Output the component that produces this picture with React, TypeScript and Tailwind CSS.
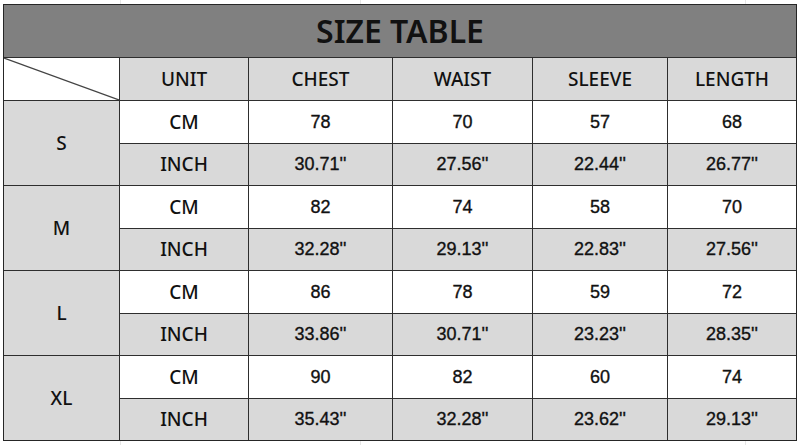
import React from "react";

const rows = [
  { size: "S", cm: ["78", "70", "57", "68"], inch: ["30.71''", "27.56''", "22.44''", "26.77''"] },
  { size: "M", cm: ["82", "74", "58", "70"], inch: ["32.28''", "29.13''", "22.83''", "27.56''"] },
  { size: "L", cm: ["86", "78", "59", "72"], inch: ["33.86''", "30.71''", "23.23''", "28.35''"] },
  { size: "XL", cm: ["90", "82", "60", "74"], inch: ["35.43''", "32.28''", "23.62''", "29.13''"] },
];

const heads = ["CHEST", "WAIST", "SLEEVE", "LENGTH"];

const label = "font-['Noto_Sans',sans-serif] font-medium text-[19px] text-[#111]";
const num = "font-['Liberation_Sans',Arial,sans-serif] text-[18px] text-[#111] [-webkit-text-stroke:0.35px_#111]";

export default function App() {
  return (
    <div className="w-[800px] h-[445px] bg-white relative overflow-hidden">
      {/* faint sheet gridlines behind the table */}
      <div className="absolute left-[120px] top-0 w-px h-full bg-[#e6e6e6]" />
      <div className="absolute left-[360px] top-0 w-px h-full bg-[#e6e6e6]" />
      <div className="absolute left-[745px] top-0 w-px h-full bg-[#e6e6e6]" />

      <div className="absolute left-[3px] top-[4px] w-[794px] h-[437px] border border-[#262626] bg-[#2e2e2e] grid grid-cols-[115px_128px_143px_139px_134px_128px] grid-rows-[52px_42px_42px_41px_42px_41px_42px_41px_42px_41px] gap-px">
        <div className="col-span-6 bg-[#808080] flex items-center justify-center">
          <span className="font-['Noto_Sans',sans-serif] font-semibold text-[32px] text-[#111]">SIZE TABLE</span>
        </div>

        <div className="bg-white relative">
          <svg className="absolute inset-0" width="115" height="42" viewBox="0 0 115 42">
            <line x1="0" y1="0" x2="115" y2="42" stroke="#444" strokeWidth="1.2" />
          </svg>
        </div>
        <div className={`bg-[#d9d9d9] flex items-center justify-center ${label}`}>UNIT</div>
        {heads.map((h) => (
          <div key={h} className={`bg-[#d9d9d9] flex items-center justify-center ${label}`}>{h}</div>
        ))}

        {rows.map((r) => (
          <React.Fragment key={r.size}>
            <div className={`row-span-2 bg-[#d9d9d9] flex items-center justify-center ${label}`}>{r.size}</div>
            <div className={`bg-white flex items-center justify-center ${label}`}>CM</div>
            {r.cm.map((v, i) => (
              <div key={i} className={`bg-white flex items-center justify-center ${num}`}>{v}</div>
            ))}
            <div className={`bg-[#d9d9d9] flex items-center justify-center ${label}`}>INCH</div>
            {r.inch.map((v, i) => (
              <div key={i} className={`bg-[#d9d9d9] flex items-center justify-center ${num}`}>{v}</div>
            ))}
          </React.Fragment>
        ))}
      </div>
    </div>
  );
}
